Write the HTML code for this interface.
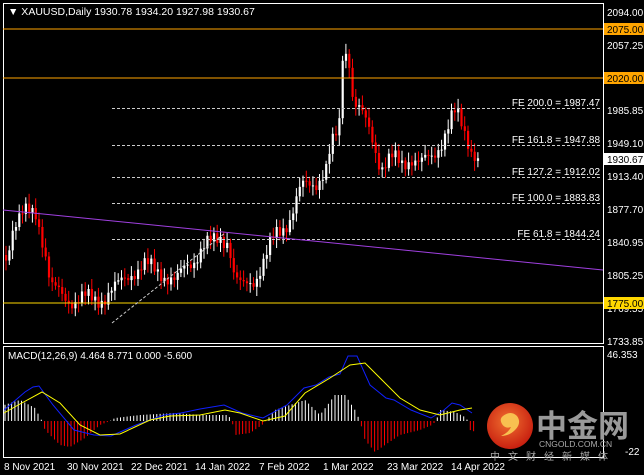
<!DOCTYPE html><html><head><meta charset="utf-8"><style>
body{margin:0;background:#000;width:644px;height:475px;overflow:hidden}
svg{display:block}
text{font-family:"Liberation Sans",sans-serif;font-size:10px;fill:#fff}
</style></head><body>
<svg id="s" width="644" height="475" xmlns="http://www.w3.org/2000/svg">
<rect width="644" height="475" fill="#000"/>
<g id="g"></g>
<rect x="3.5" y="3.5" width="600" height="340" fill="none" stroke="#fff"/>
<rect x="3.5" y="346.5" width="600" height="111" fill="none" stroke="#fff"/>
<line x1="3" y1="29" x2="603" y2="29" stroke="#ffa500"/>
<line x1="3" y1="78" x2="603" y2="78" stroke="#ffa500"/>
<line x1="3" y1="303" x2="603" y2="303" stroke="#ffd700"/>
<g stroke="#ccc" stroke-dasharray="3,2">
<line x1="112" y1="108.5" x2="600" y2="108.5"/><line x1="112" y1="145.5" x2="600" y2="145.5"/>
<line x1="112" y1="177.5" x2="600" y2="177.5"/><line x1="112" y1="203.5" x2="600" y2="203.5"/>
<line x1="112" y1="239.5" x2="600" y2="239.5"/><line x1="112" y1="323" x2="225" y2="233"/></g>
<line x1="3" y1="210" x2="603" y2="270" stroke="#a040e0"/>
<g fill="#b0d8f0" style="font-size:10px" text-anchor="end">
<text x="600" y="106">FE 200.0 = 1987.47</text><text x="600" y="143">FE 161.8 = 1947.88</text>
<text x="600" y="175">FE 127.2 = 1912.02</text><text x="600" y="201">FE 100.0 = 1883.83</text>
<text x="600" y="237">FE 61.8 = 1844.24</text></g>
<text x="8" y="15" style="font-size:10.5px">▼ XAUUSD,Daily  1930.78 1934.20 1927.98 1930.67</text>
<g>
<text x="607" y="16">2094.00</text>
<rect x="604" y="23" width="40" height="12" fill="#ffa500"/><text x="607" y="33" style="fill:#000">2075.00</text>
<text x="607" y="49">2057.25</text>
<rect x="604" y="72" width="40" height="12" fill="#ffa500"/><text x="607" y="82" style="fill:#000">2020.00</text>
<text x="607" y="114">1985.85</text><text x="607" y="147">1949.10</text>
<rect x="604" y="153" width="40" height="12" fill="#fff"/><text x="607" y="163" style="fill:#000">1930.67</text>
<text x="607" y="180">1913.40</text><text x="607" y="213">1877.70</text><text x="607" y="246">1840.95</text>
<text x="607" y="279">1805.25</text><text x="607" y="312">1769.55</text>
<rect x="604" y="297" width="40" height="12" fill="#ffd700"/><text x="607" y="307" style="fill:#000">1775.00</text>
<text x="607" y="345">1733.85</text>
<text x="607" y="358">46.353</text><text x="625" y="455">-22</text>
<text x="8" y="359">MACD(12,26,9) 4.464 8.771 0.000 -5.600</text>
</g>
<g>
<text x="4" y="470">8 Nov 2021</text><text x="67" y="470">30 Nov 2021</text><text x="131" y="470">22 Dec 2021</text>
<text x="195" y="470">14 Jan 2022</text><text x="259" y="470">7 Feb 2022</text><text x="323" y="470">1 Mar 2022</text>
<text x="387" y="470">23 Mar 2022</text><text x="451" y="470">14 Apr 2022</text></g>
<defs><radialGradient id="lg" cx="45%" cy="40%" r="60%"><stop offset="0" stop-color="#f07030"/><stop offset="1" stop-color="#c82010"/></radialGradient></defs>
<circle cx="510" cy="426" r="23" fill="url(#lg)"/>
<path d="M503 416 q8-6 14 0 q5 7-2 14 q-6 6-14 6 q8-4 10-9 q-6 2-9-3 q-3-5 1-8z" fill="#f8c050"/>
<text x="536" y="437" style="font-family:'Noto Sans CJK SC',sans-serif;font-size:31px;fill:#9a9a9a;font-weight:bold">中金网</text>
<text x="539" y="447" style="font-size:8.5px;fill:#aaa">CNGOLD.COM.CN</text>
<text x="490" y="460" style="font-family:'Noto Sans CJK SC',sans-serif;font-size:10px;fill:#aaa;letter-spacing:8px">中文财经新媒体</text>
</svg>
<script>
(function(){
var g=document.getElementById('g'),h='';
function it(p,x){for(var i=0;i<p.length-1;i++){if(x<=p[i+1][0]){var t=(x-p[i][0])/(p[i+1][0]-p[i][0]);return p[i][1]+t*(p[i+1][1]-p[i][1]);}}return p[p.length-1][1];}
var K=[[5,255],[12,225],[25,215],[35,210],[42,240],[50,290],[60,295],[75,300],[90,300],[105,295],[115,290],[130,270],[145,268],[160,270],[175,285],[185,265],[200,250],[210,245],[220,235],[228,240],[232,275],[240,290],[255,275],[265,258],[275,235],[290,215],[300,190],[315,180],[325,170],[330,150],[338,130],[342,45],[348,55],[352,100],[360,115],[370,135],[380,165],[390,160],[400,165],[410,155],[420,165],[430,160],[440,140],[450,120],[455,115],[465,135],[472,150],[478,160]];
var prev=it(K,5);
for(var x=5;x<=478;x+=3.3){var c=it(K,x)+Math.sin(x*1.7)*8+Math.cos(x*0.9)*4;var o=prev;prev=c;
var bt=Math.min(o,c),bb=Math.max(o,c);var up=c<o;var col=up?'#fff':'#f00';
var hi=bt-3-Math.abs(Math.sin(x*2.3))*7,lo=bb+3+Math.abs(Math.cos(x*1.3))*7;
h+='<line x1="'+(x+1)+'" y1="'+hi+'" x2="'+(x+1)+'" y2="'+lo+'" stroke="'+col+'"/>';
h+='<rect x="'+x+'" y="'+bt+'" width="2.2" height="'+Math.max(1,bb-bt)+'" fill="'+col+'"/>';}
var H=[[4,405],[20,400],[35,408],[42,421],[45,430],[60,445],[70,447],[85,438],[100,425],[110,421],[115,418],[140,415],[175,413],[200,415],[228,415],[232,421],[235,435],[250,433],[262,425],[266,421],[275,410],[290,405],[305,400],[320,415],[335,395],[345,395],[355,410],[360,421],[365,440],[375,452],[385,445],[400,435],[420,430],[432,425],[436,421],[440,410],[455,412],[465,417],[468,421],[470,430],[476,432]];
for(var x=5;x<=476;x+=3.3){var y=it(H,x);var col=y<421?'#fff':'#f00';h+='<line x1="'+x+'" y1="421" x2="'+x+'" y2="'+y+'" stroke="'+col+'"/>';}
function pl(a,c){h+='<polyline fill="none" stroke="'+c+'" points="'+a.map(function(p){return p.join(',')}).join(' ')+'"/>';}
pl([[4,410],[25,392],[33,387],[39,386],[53,405],[74,430],[94,435],[111,436],[136,425],[164,415],[181,413],[200,409],[224,405],[242,413],[263,418],[287,405],[304,388],[316,385],[329,377],[340,374],[348,356],[357,356],[370,385],[386,398],[394,400],[411,410],[431,418],[444,410],[452,403],[460,405],[472,413]],'#1020ff');
pl([[4,413],[20,404],[42,392],[60,403],[80,425],[100,435],[120,434],[150,420],[170,416],[200,415],[225,410],[240,413],[263,421],[285,416],[305,393],[330,378],[350,365],[365,363],[380,378],[400,398],[420,410],[440,415],[460,410],[472,408]],'#ffff00');
g.innerHTML=h;
})();
</script>
</body></html>
